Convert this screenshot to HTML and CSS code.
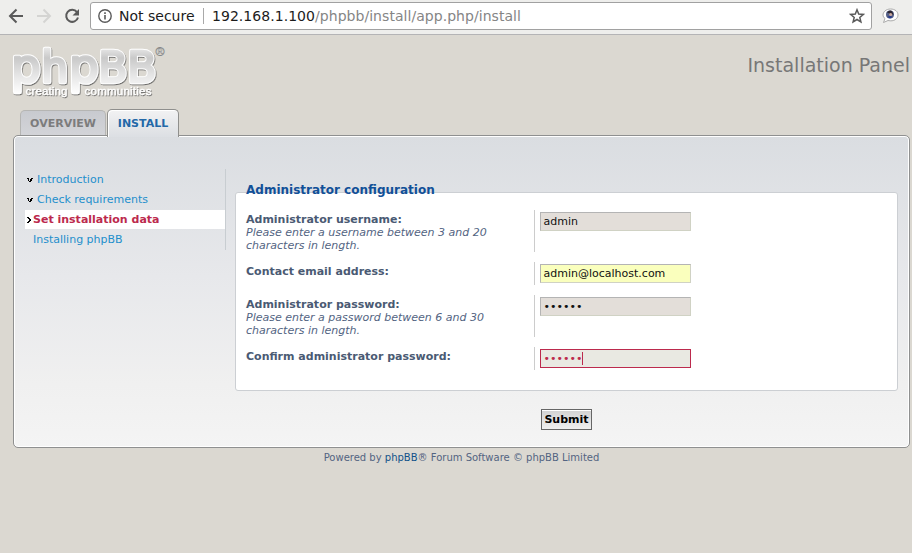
FILE: index.html
```html
<!DOCTYPE html>
<html lang="en">
<head>
<meta charset="utf-8">
<title>Installation Panel</title>
<link rel="stylesheet" href="styles.css">
</head>
<body>
<div class="toolbar">
  <svg class="nav" width="72" height="20" viewBox="0 0 72 20" fill="none" stroke-width="2">
    <path d="M15 10H2.500M8.500 3.500L2 10l6.500 6.500" stroke="#5a5a5a"/>
    <path d="M29 10h12.500M35.500 3.500L42 10l-6.500 6.500" stroke="#d4d4d2"/>
    <path d="M69 6.200A6 6 0 1 0 70 11.500" stroke="#5a5a5a"/>
    <path d="M71 3v6.500h-6.500z" fill="#5a5a5a"/>
  </svg>
  <div class="address">
    <svg class="info" width="14" height="14" viewBox="0 0 14 14" fill="none" stroke="#5a5a5a">
      <circle cx="7" cy="7" r="6.200" stroke-width="1.400"/>
      <path d="M7 6v4.500M7 3.300v1.600" stroke-width="1.600"/>
    </svg>
    <span class="secure">Not secure</span>
    <span class="url">192.168.1.100<span class="path">/phpbb/install/app.php/install</span></span>
    <svg class="star" width="16" height="16" viewBox="0 0 16 16" fill="none" stroke="#5a5a5a" stroke-width="1.500">
      <path d="M8 1.800l1.700 4.300 4.600.3-3.500 3 1.100 4.500L8 11.500l-3.900 2.400 1.100-4.500-3.500-3 4.600-.3z"/>
    </svg>
  </div>
  <svg class="ext" width="18" height="16" viewBox="0 0 18 16">
    <path d="M3 10.500L1.500 14.500 6 12.500C12 14 16 10.500 16 7S13 1 8.500 1 1 4 1 7c0 1.500.8 2.700 2 3.500z" fill="#fff" stroke="#aaa"/>
    <circle cx="8" cy="6.500" r="4" fill="#566086"/>
    <path d="M5 4.500q3-3.500 5.500-.5l1 3-2.500-1z" fill="#2c2630"/>
    <circle cx="8.700" cy="6.500" r="1.500" fill="#c9a79c"/>
    <path d="M5.500 9q2.500-2 5 0l-2.500 1.500z" fill="#263d8e"/>
  </svg>
</div>

<header class="header">
  <svg class="logo" width="156" height="56" viewBox="11 44 156 56">
    <defs>
      <linearGradient id="metal" gradientUnits="userSpaceOnUse" x1="0" y1="46" x2="0" y2="94">
        <stop offset="0" stop-color="#ededed"/><stop offset=".25" stop-color="#c9c9c9"/>
        <stop offset=".62" stop-color="#e6e6e6"/><stop offset="1" stop-color="#fff"/>
      </linearGradient>
      <filter id="shade" x="-10%" y="-10%" width="120%" height="130%">
        <feDropShadow dx=".7" dy="1" stdDeviation=".5" flood-color="#555" flood-opacity=".8"/>
      </filter>
      <g id="word">
        <text x="11" y="82" font-size="47">p</text>
        <text x="41.300" y="82" font-size="42.500">h</text>
        <text x="69" y="82" font-size="47">p</text>
        <text x="98.300" y="82" font-size="42.500">B</text>
        <text x="127.300" y="82" font-size="42.500">B</text>
      </g>
    </defs>
    <g filter="url(#shade)">
      <use href="#word" class="rim"/>
      <use href="#word" class="face"/>
    </g>
    <text class="mark" x="154" y="56">®</text>
    <g filter="url(#shade)" class="motto">
      <text x="25.500" y="94.500" textLength="42">creating</text>
      <text x="84.500" y="94.500" textLength="67">communities</text>
    </g>
  </svg>
  <h1>Installation Panel</h1>
</header>

<nav class="tabs">
  <a class="tab">OVERVIEW</a>
  <a class="tab current">INSTALL</a>
</nav>

<main class="panel">
  <ul class="steps">
    <li class="done"><svg width="7" height="5" viewBox="0 0 7 5" shape-rendering="crispEdges"><path d="M0 0h2v1H0zM4 0h2v1H4zM1 1h1v1H1zM3 1h2v1H3zM1 2h1v1H1zM3 2h2v1H3zM2 3h2v1H2z"/></svg>Introduction</li>
    <li class="done"><svg width="7" height="5" viewBox="0 0 7 5" shape-rendering="crispEdges"><path d="M0 0h2v1H0zM4 0h2v1H4zM1 1h1v1H1zM3 1h2v1H3zM1 2h1v1H1zM3 2h2v1H3zM2 3h2v1H2z"/></svg>Check requirements</li>
    <li class="active"><svg width="5" height="6" viewBox="0 0 5 6" shape-rendering="crispEdges"><path d="M0 0h2v1H0zM1 1h2v1H1zM2 2h2v2H2zM1 4h2v1H1zM0 5h2v1H0z"/></svg>Set installation data</li>
    <li>Installing phpBB</li>
  </ul>
  <div class="content">
    <section class="box">
      <h2>Administrator configuration</h2>
      <div class="row tall">
        <div class="label"><b>Administrator username:</b><i>Please enter a username between 3 and 20 characters in length.</i></div>
        <div class="value"><div class="field">admin</div></div>
      </div>
      <div class="row">
        <div class="label"><b>Contact email address:</b></div>
        <div class="value"><div class="field filled">admin@localhost.com</div></div>
      </div>
      <div class="row tall">
        <div class="label"><b>Administrator password:</b><i>Please enter a password between 6 and 30 characters in length.</i></div>
        <div class="value"><div class="field">••••••</div></div>
      </div>
      <div class="row">
        <div class="label"><b>Confirm administrator password:</b></div>
        <div class="value"><div class="field focus">••••••<span class="caret"></span></div></div>
      </div>
    </section>
    <button class="submit">Submit</button>
  </div>
</main>
<footer>Powered by <a>phpBB</a>® Forum Software © phpBB Limited</footer>
</body>
</html>
```
FILE: styles.css
```css
* { box-sizing: border-box; }
body {
  margin: 0;
  height: 553px;
  overflow: hidden;
  background: #dbd8d1;
  font: 11px/13px "DejaVu Sans", sans-serif;
  color: #536482;
}
.toolbar {
  height: 35px;
  padding: 2px 0 0 8px;
  display: flex;
  background: #eeeeec;
  border-bottom: 1px solid #b4b4b6;
}
.nav { margin-top: 4px; flex: none; }
.address {
  width: 782px;
  height: 28px;
  margin-left: 10px;
  padding: 0 7px;
  display: flex;
  align-items: center;
  background: #fff;
  border: 1px solid #a1a1a1;
  border-radius: 3px;
  font-size: 14px;
  line-height: 26px;
  color: #1c1c1c;
  white-space: nowrap;
}
.secure { margin-left: 7px; width: 84px; }
.url { padding-left: 8px; line-height: 16px; border-left: 1px solid #a9a9a9; letter-spacing: .045px; }
.path { color: #858585; }
.star { margin-left: auto; margin-right: -1px; }
.ext { margin: 6px 0 0 10px; }

.header {
  height: 74px;
  padding: 9px 2px 0 11px;
  display: flex;
  justify-content: space-between;
}
.logo text { font-family: "DejaVu Sans", sans-serif; }
.rim { fill: #fff; stroke: #fff; stroke-width: 4.600px; stroke-linejoin: round; }
.face { fill: url(#metal); stroke: url(#metal); stroke-width: 2.600px; stroke-linejoin: round; }
.logo .mark { font-size: 12px; fill: #fff; stroke: #888; stroke-width: .5px; }
.logo .motto text { font-family: "Liberation Sans", sans-serif; font-size: 11.500px; fill: #fff; stroke: #fff; stroke-width: .3px; }
h1 {
  margin: 10px 0 0;
  font-size: 19px;
  line-height: 23px;
  font-weight: normal;
  color: #777;
}
.tabs {
  height: 26px;
  padding-left: 20px;
  display: flex;
  align-items: flex-end;
  gap: 1px;
}
.tab {
  width: 86px;
  height: 25px;
  padding-top: 6px;
  text-align: center;
  font-weight: bold;
  color: #7c7c7c;
  background: linear-gradient(#c8cacf, #d3d4d8);
  border: 1px solid #b5b5b3;
  border-bottom: 0;
  border-radius: 5px 5px 0 0;
}
.tab.current {
  position: relative;
  z-index: 1;
  width: 72px;
  height: 28px;
  padding-top: 7px;
  margin-bottom: -2px;
  color: #2368a8;
  background: linear-gradient(#f2f2f3, #dcdfe3);
  border-color: #8f8f8d;
  box-shadow: inset 1px 1px #fff;
}
.panel {
  width: 897px;
  height: 313px;
  margin-left: 13px;
  padding: 32px 10px 0;
  display: flex;
  gap: 9px;
  background: linear-gradient(#dadde1, #e7e8eb 45%, #f0f0f0 80%, #f4f4f4);
  border: 1px solid #8f9090;
  border-radius: 5px;
  box-shadow: inset 0 0 0 1px #fff;
}
.steps {
  width: 202px;
  height: 81px;
  margin: 1px 0 0;
  padding: 1px 0 0 1px;
  list-style: none;
  border-right: 1px solid #c8cdd1;
}
.steps li {
  height: 19px;
  margin-bottom: 1px;
  padding-left: 8px;
  line-height: 20px;
  display: flex;
  align-items: center;
  color: #1e8fcc;
}
.steps li.done { padding-left: 2px; }
.steps li.done svg { margin-right: 3px; margin-top: 2px; }
.steps li.active { padding-left: 2px; background: #fff; font-weight: bold; color: #bc2a4d; }
.steps li.active svg { margin-right: 1px; margin-top: 1px; }
.content { width: 663px; padding-top: 24px; }
.box {
  height: 199px;
  padding: 0 10px;
  background: #fff;
  border: 1px solid #cccfd3;
  border-radius: 3px;
}
h2 {
  height: 28px;
  margin: -11px 0 0;
  line-height: 16px;
  font-size: 12px;
  color: #115098;
}
.row { height: 23px; margin-bottom: 10px; display: flex; }
.row.tall { height: 42px; }
.label { width: 288px; padding: 3px 35px 0 0; }
.label b, .label i { display: block; }
.label b { color: #4a5a73; }
.value { padding: 2px 0 0 5px; border-left: 1px solid #ccc; }
.field {
  width: 151px;
  height: 19px;
  padding: 0 2.500px;
  line-height: 17px;
  color: #111;
  background: #e3ded9;
  border: 1px solid;
  border-color: #b4b4b4 #d0d2c4 #d0d2c4 #b4b4b4;
}
.field.filled { background: #faffbd; }
.field.focus { display: flex; align-items: center; background: #e9e9e2; border-color: #bc2a4d; color: #bc2a4d; }
.caret { width: 1px; height: 13px; margin-left: -.5px; background: #bc2a4d; }
.submit {
  display: block;
  width: 51px;
  height: 21px;
  margin: 18px 0 0 306px;
  padding: 0;
  font: bold 11px/17px "DejaVu Sans", sans-serif;
  color: #000;
  background: linear-gradient(#d2d2d2, #efefef);
  border: 1px solid #666;
  box-shadow: inset 0 1px #fff;
}
footer {
  margin-top: 3px;
  padding-left: 11px;
  text-align: center;
  font-size: 10px;
}
footer a { color: #105289; }
```
